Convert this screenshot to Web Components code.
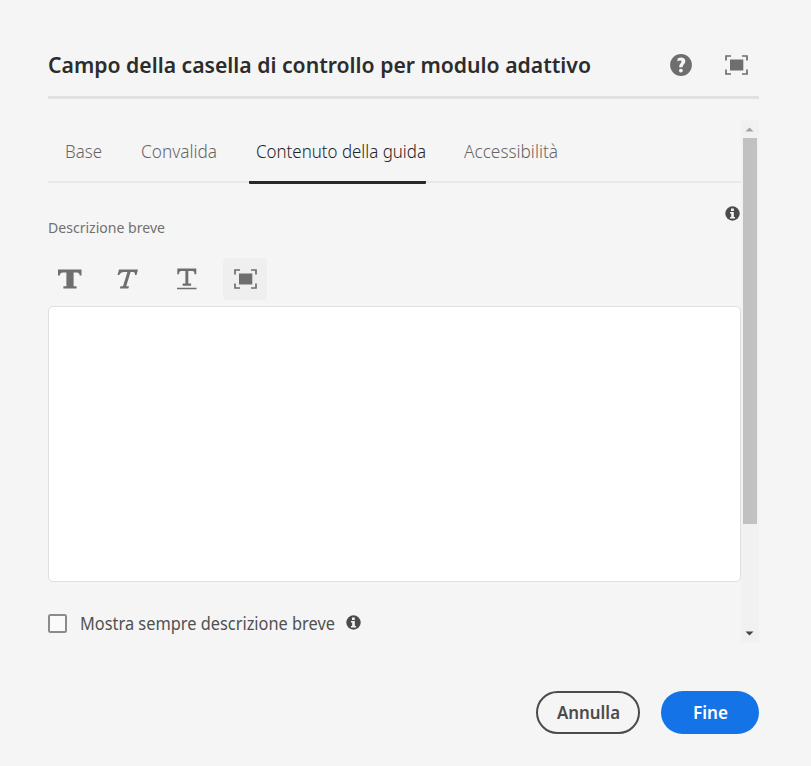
<!DOCTYPE html>
<html lang="it"><head><meta charset="utf-8"><title>Campo della casella di controllo per modulo adattivo</title>
<style>
html,body{margin:0;height:100%;background:#f5f5f5;overflow:hidden}
body{font-family:"Noto Sans","Open Sans",sans-serif}
</style></head><body>
<field-dialog></field-dialog>
<script>
function define(name, html, setup) {
  const t = document.createElement('template');
  t.innerHTML = html;
  customElements.define(name, class extends HTMLElement {
    constructor() { super(); this.attachShadow({mode: 'open'}).append(t.content.cloneNode(true)); }
    connectedCallback() { if (setup) setup(this); }
  });
}

// Text set to a fixed measure: the glyphs are condensed to the width given in "w".
define('fit-text', `<style>:host{display:block;white-space:nowrap;line-height:24px;height:24px}
span{display:inline-block;transform-origin:0 50%}</style><span><slot></slot></span>`, el => {
  const span = el.shadowRoot.querySelector('span');
  const w = +el.getAttribute('w');
  el.style.width = w + 'px';
  span.style.transform = 'scaleX(' + w / span.getBoundingClientRect().width + ')';
});

const icons = {
  help: [22, 22, '<circle cx="11" cy="11" r="10.9"/><path d="M7.5 7.6V4.7Q9.2 3.6 11 3.6q4.3 0 4.3 3.6 0 1.8-1.6 3.2-1.1 1.1-1.1 2.3v.5H9.2v-.8q0-1.5 1.3-2.9 1-1 1-1.9 0-1.2-1.3-1.2-1.5 0-2.7 1.2z" fill="#f5f5f5"/><circle cx="10.9" cy="16.6" r="1.9" fill="#f5f5f5"/>'],
  full: [23, 20, '<path d="M5 4.5h13.3v11H5z"/><path d="M1 5.5V1h5M17 1h5v4.5M22 14.5V19h-5M6 19H1v-4.5" fill="none" stroke="currentColor" stroke-width="1.7"/>'],
  bold: [24, 20, '<path d="M0 .5h23.5v6h-1.8q-.2-3-2.8-3h-3.3v13.8h3v2.2H5.4v-2.2h3V3.5H5q-3 0-3.2 3H0z"/>'],
  italic: [22, 20, '<path d="M2 .5h19l-1.5 5.6H18Q18.2 2.9 16 2.9h-2.4L9.2 17.2H12l-.7 2.2H2.8l.7-2.2h2.5l4.4-14.3H7Q3.8 2.9 2.2 6.1H.5z"/>'],
  under: [20, 22, '<path d="M.3 .5h19v5.7h-1.8q0-3.1-2.2-3.1h-4v12.4h2.8v2.3H5.6v-2.3h2.8V3.1H4.2q-2.1 0-2.1 3.1H.3zM0 19.7h19.5v1.5H0z"/>'],
  info: [15, 15, '<circle cx="7.5" cy="7.5" r="7.2"/><path d="M6 2.4h2.8v2.5H6zM5 6h3.8v5h1.2v1.4H5V11h1.2V7.4H5z" fill="#f5f5f5"/>']
};
define('ui-icon', `<style>:host{display:block;color:#6e6e6e}svg{display:block;fill:currentColor}</style><svg></svg>`, el => {
  const [w, h, body] = icons[el.getAttribute('name')];
  const svg = el.shadowRoot.querySelector('svg');
  svg.setAttribute('width', w); svg.setAttribute('height', h); svg.innerHTML = body;
});

define('tab-item', `<style>:host{display:flex;box-sizing:border-box;height:63px;padding-top:18px;color:#666;font-size:18.3px;font-weight:300;border-bottom:3px solid transparent}
:host([selected]){color:#242424;border-bottom-color:#292929;border-radius:1px}</style><slot></slot>`);

define('tab-bar', `<style>:host{display:grid;grid-template-columns:92px 109px 177px 1fr;height:63px;
background:linear-gradient(#e9e9e9,#e9e9e9) 0 60px/100% 2px no-repeat}
tab-item:nth-of-type(1){padding-left:17px}tab-item:nth-of-type(2){padding-left:.5px}tab-item:nth-of-type(3){padding-left:6.5px}tab-item:nth-of-type(4){padding-left:38px}</style>
<tab-item><fit-text w="37">Base</fit-text></tab-item><tab-item><fit-text w="76">Convalida</fit-text></tab-item>
<tab-item selected><fit-text w="170">Contenuto della guida</fit-text></tab-item><tab-item><fit-text w="94">Accessibilità</fit-text></tab-item>`);

define('tool-button', `<style>:host{display:flex;align-items:center;justify-content:center;width:44px;height:42px;border-radius:4px}
:host([active]){background:#efefef}</style><slot></slot>`);

define('check-box', `<style>:host{display:flex;align-items:center;color:#505050;font-size:17.8px}
i{box-sizing:border-box;width:19px;height:19px;border:2px solid #8b8b8b;border-radius:2.5px;background:#fafafa;margin-right:13px}
ui-icon{color:#4b4b4b;margin:-1px 0 0 11px}</style><i></i><fit-text w="255">Mostra sempre descrizione breve</fit-text><ui-icon name="info"></ui-icon>`);

define('scroll-rail', `<style>:host{display:flex;flex-direction:column;align-items:center;width:18px;height:523px;background:#f1f1f1}
svg{display:block;flex:none}b{width:14px;height:386px;background:#c1c1c1}.down{margin-top:auto}</style>
<svg width="17" height="18"><path d="M4.5 11.5l4-4 4 4z" fill="#a3a3a3"/></svg><b></b>
<svg class="down" width="17" height="18"><path d="M4.5 6.5h8l-4 4z" fill="#454545"/></svg>`);

define('pill-button', `<style>:host{display:flex;box-sizing:border-box;align-items:center;justify-content:center;height:43px;border-radius:22px;font-size:17.3px;font-weight:600}
:host([kind=outline]){width:104px;border:2px solid #4b4b4b;color:#4b4b4b}
:host([kind=primary]){width:98px;background:#1473e6;color:#fff}</style><slot></slot>`);

define('field-dialog', `<style>
:host{display:block;box-sizing:border-box;width:811px;height:766px;padding:41px 52px 0 48px;background:#f5f5f5}
header{display:flex;align-items:center;box-sizing:border-box;height:58px;padding:0 11px 7px 0;border-bottom:3px solid #e1e1e1}
header fit-text{font-size:21.5px;font-weight:600;color:#2c2c2c;margin-right:auto}
header ui-icon:last-child{margin-left:33px}
.body{display:flex;height:523px;margin-top:21px}
main{width:692.5px;flex:none;padding-top:1px}
.label{display:flex;justify-content:space-between;height:43px;padding-top:22px}
.label fit-text{font-size:15px;color:#707070;margin-top:9px}
.label ui-icon{color:#4b4b4b;margin:-.5px .5px 0 0}
.tools{display:flex;gap:14.5px;height:42px;padding-top:9px;margin-left:-.5px}
.area{box-sizing:border-box;height:276px;margin-top:6px;border:1px solid #dfdfdf;border-radius:5px;background:#fff}
check-box{margin-top:29px}
footer{display:flex;justify-content:flex-end;gap:21px;margin-top:48px}
</style>
<header><fit-text w="543">Campo della casella di controllo per modulo adattivo</fit-text><ui-icon name="help"></ui-icon><ui-icon name="full"></ui-icon></header>
<div class="body"><main><tab-bar></tab-bar>
<div class="label"><fit-text w="117">Descrizione breve</fit-text><ui-icon name="info"></ui-icon></div>
<div class="tools"><tool-button><ui-icon name="bold"></ui-icon></tool-button><tool-button><ui-icon name="italic"></ui-icon></tool-button><tool-button><ui-icon name="under"></ui-icon></tool-button><tool-button active><ui-icon name="full"></ui-icon></tool-button></div>
<div class="area" role="textbox"></div><check-box></check-box></main><scroll-rail></scroll-rail></div>
<footer><pill-button kind="outline"><fit-text w="63">Annulla</fit-text></pill-button><pill-button kind="primary"><fit-text w="35">Fine</fit-text></pill-button></footer>`);
</script></body></html>
